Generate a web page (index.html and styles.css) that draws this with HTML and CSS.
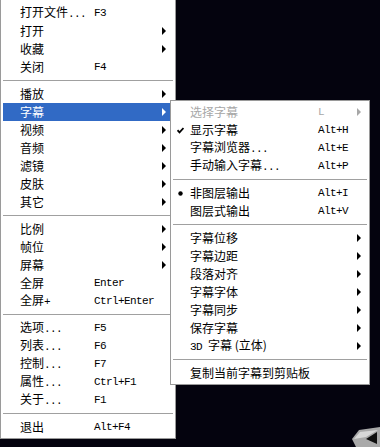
FILE: index.html
```html
<!DOCTYPE html>
<html>
<head>
<meta charset="utf-8">
<link rel="stylesheet" href="styles.css">
</head>
<body>
<div class="stage">
  <div class="menu main">
    <div class="item"><span class="lbl">打开文件<span class="m">...</span></span><span class="key">F3</span></div>
    <div class="item"><span class="lbl">打开</span><span class="key"></span><i class="arrow"></i></div>
    <div class="item"><span class="lbl">收藏</span><span class="key"></span><i class="arrow"></i></div>
    <div class="item"><span class="lbl">关闭</span><span class="key">F4</span></div>
    <div class="sep"></div>
    <div class="item"><span class="lbl">播放</span><span class="key"></span><i class="arrow"></i></div>
    <div class="item active"><span class="lbl">字幕</span><span class="key"></span><i class="arrow"></i></div>
    <div class="item"><span class="lbl">视频</span><span class="key"></span><i class="arrow"></i></div>
    <div class="item"><span class="lbl">音频</span><span class="key"></span><i class="arrow"></i></div>
    <div class="item"><span class="lbl">滤镜</span><span class="key"></span><i class="arrow"></i></div>
    <div class="item"><span class="lbl">皮肤</span><span class="key"></span><i class="arrow"></i></div>
    <div class="item"><span class="lbl">其它</span><span class="key"></span><i class="arrow"></i></div>
    <div class="sep"></div>
    <div class="item"><span class="lbl">比例</span><span class="key"></span><i class="arrow"></i></div>
    <div class="item"><span class="lbl">帧位</span><span class="key"></span><i class="arrow"></i></div>
    <div class="item"><span class="lbl">屏幕</span><span class="key"></span><i class="arrow"></i></div>
    <div class="item"><span class="lbl">全屏</span><span class="key">Enter</span></div>
    <div class="item"><span class="lbl">全屏<span class="m">+</span></span><span class="key">Ctrl+Enter</span></div>
    <div class="sep"></div>
    <div class="item"><span class="lbl">选项<span class="m">...</span></span><span class="key">F5</span></div>
    <div class="item"><span class="lbl">列表<span class="m">...</span></span><span class="key">F6</span></div>
    <div class="item"><span class="lbl">控制<span class="m">...</span></span><span class="key">F7</span></div>
    <div class="item"><span class="lbl">属性<span class="m">...</span></span><span class="key">Ctrl+F1</span></div>
    <div class="item"><span class="lbl">关于<span class="m">...</span></span><span class="key">F1</span></div>
    <div class="sep"></div>
    <div class="item"><span class="lbl">退出</span><span class="key">Alt+F4</span></div>
  </div>

  <div class="menu submenu">
    <div class="item disabled"><span class="mark"></span><span class="lbl">选择字幕</span><span class="key">L</span><i class="arrow"></i></div>
    <div class="item"><span class="mark"><svg width="7" height="7" viewBox="0 0 7 7"><path d="M0.5 3.2 L2.5 5.4 L6.5 1" fill="none" stroke="#000" stroke-width="1.8"/></svg></span><span class="lbl">显示字幕</span><span class="key">Alt+H</span></div>
    <div class="item"><span class="mark"></span><span class="lbl">字幕浏览器<span class="m">...</span></span><span class="key">Alt+E</span></div>
    <div class="item"><span class="mark"></span><span class="lbl">手动输入字幕<span class="m">...</span></span><span class="key">Alt+P</span></div>
    <div class="sep"></div>
    <div class="item"><span class="mark"><svg width="7" height="7" viewBox="0 0 7 7"><circle cx="3.5" cy="3.5" r="2.2" fill="#000"/></svg></span><span class="lbl">非图层输出</span><span class="key">Alt+I</span></div>
    <div class="item"><span class="mark"></span><span class="lbl">图层式输出</span><span class="key">Alt+V</span></div>
    <div class="sep"></div>
    <div class="item"><span class="mark"></span><span class="lbl">字幕位移</span><span class="key"></span><i class="arrow"></i></div>
    <div class="item"><span class="mark"></span><span class="lbl">字幕边距</span><span class="key"></span><i class="arrow"></i></div>
    <div class="item"><span class="mark"></span><span class="lbl">段落对齐</span><span class="key"></span><i class="arrow"></i></div>
    <div class="item"><span class="mark"></span><span class="lbl">字幕字体</span><span class="key"></span><i class="arrow"></i></div>
    <div class="item"><span class="mark"></span><span class="lbl">字幕同步</span><span class="key"></span><i class="arrow"></i></div>
    <div class="item"><span class="mark"></span><span class="lbl">保存字幕</span><span class="key"></span><i class="arrow"></i></div>
    <div class="item"><span class="mark"></span><span class="lbl"><span class="m">3D </span>字幕 (立体)</span><span class="key"></span><i class="arrow"></i></div>
    <div class="sep"></div>
    <div class="item"><span class="mark"></span><span class="lbl wide">复制当前字幕到剪贴板</span></div>
  </div>

  <svg class="grip" width="28" height="20" viewBox="0 0 28 20">
    <polygon points="0,12 7,3 28,0 28,20 4,20" fill="#a9a9a9"/>
    <polygon points="2,12 8,5 26,3 14,10" fill="#d8d8d8"/>
    <polygon points="14,12 25,5 25,17" fill="#101010"/>
  </svg>
</div>
</body>
</html>
```

FILE: styles.css
```css
html, body {
  margin: 0;
  padding: 0;
}
body {
  background: #04030e;
  width: 380px;
  height: 447px;
  overflow: hidden;
  font-family: "Noto Sans CJK SC", "Noto Sans", sans-serif;
  font-size: 12px;
  color: #000;
}
.stage {
  position: relative;
  width: 380px;
  height: 447px;
}
.menu {
  background: #fff;
  border: 1px solid #9a9a9a;
  box-sizing: border-box;
  padding: 2px;
}
.main {
  width: 176px;
  border-top: 0;
  padding-top: 4px;
  padding-bottom: 2px;
}
.submenu {
  position: absolute;
  left: 170px;
  top: 100px;
  width: 200px;
}
.item {
  display: flex;
  align-items: center;
  height: 18px;
  line-height: 18px;
  padding-left: 17px;
  white-space: nowrap;
}
.submenu .item {
  padding-left: 0;
}
.mark {
  width: 17px;
  height: 18px;
  display: flex;
  align-items: center;
  padding-left: 4px;
  box-sizing: border-box;
}
.lbl {
  width: 74px;
  flex: none;
}
.submenu .lbl {
  width: 128px;
}
.submenu .lbl.wide {
  width: auto;
}
.m, .key {
  font-family: "Liberation Mono", "DejaVu Sans Mono", monospace;
  font-size: 11px;
  letter-spacing: -0.6px;
}
.key {
  flex: 1;
}
.arrow {
  width: 0;
  height: 0;
  border-left: 4px solid #000;
  border-top: 4px solid transparent;
  border-bottom: 4px solid transparent;
  margin-right: 7px;
}
.submenu .arrow {
  margin-right: 6px;
}
.active {
  background: #316ac5;
  color: #fff;
}
.active .arrow {
  border-left-color: #fff;
}
.disabled {
  color: #a7a7a7;
}
.disabled .arrow {
  border-left-color: #a7a7a7;
}
.sep {
  height: 9px;
  display: flex;
  align-items: center;
}
.sep::before {
  content: "";
  flex: 1;
  height: 1px;
  background: #a0a0a0;
}
.grip {
  position: absolute;
  left: 352px;
  top: 427px;
}
```
